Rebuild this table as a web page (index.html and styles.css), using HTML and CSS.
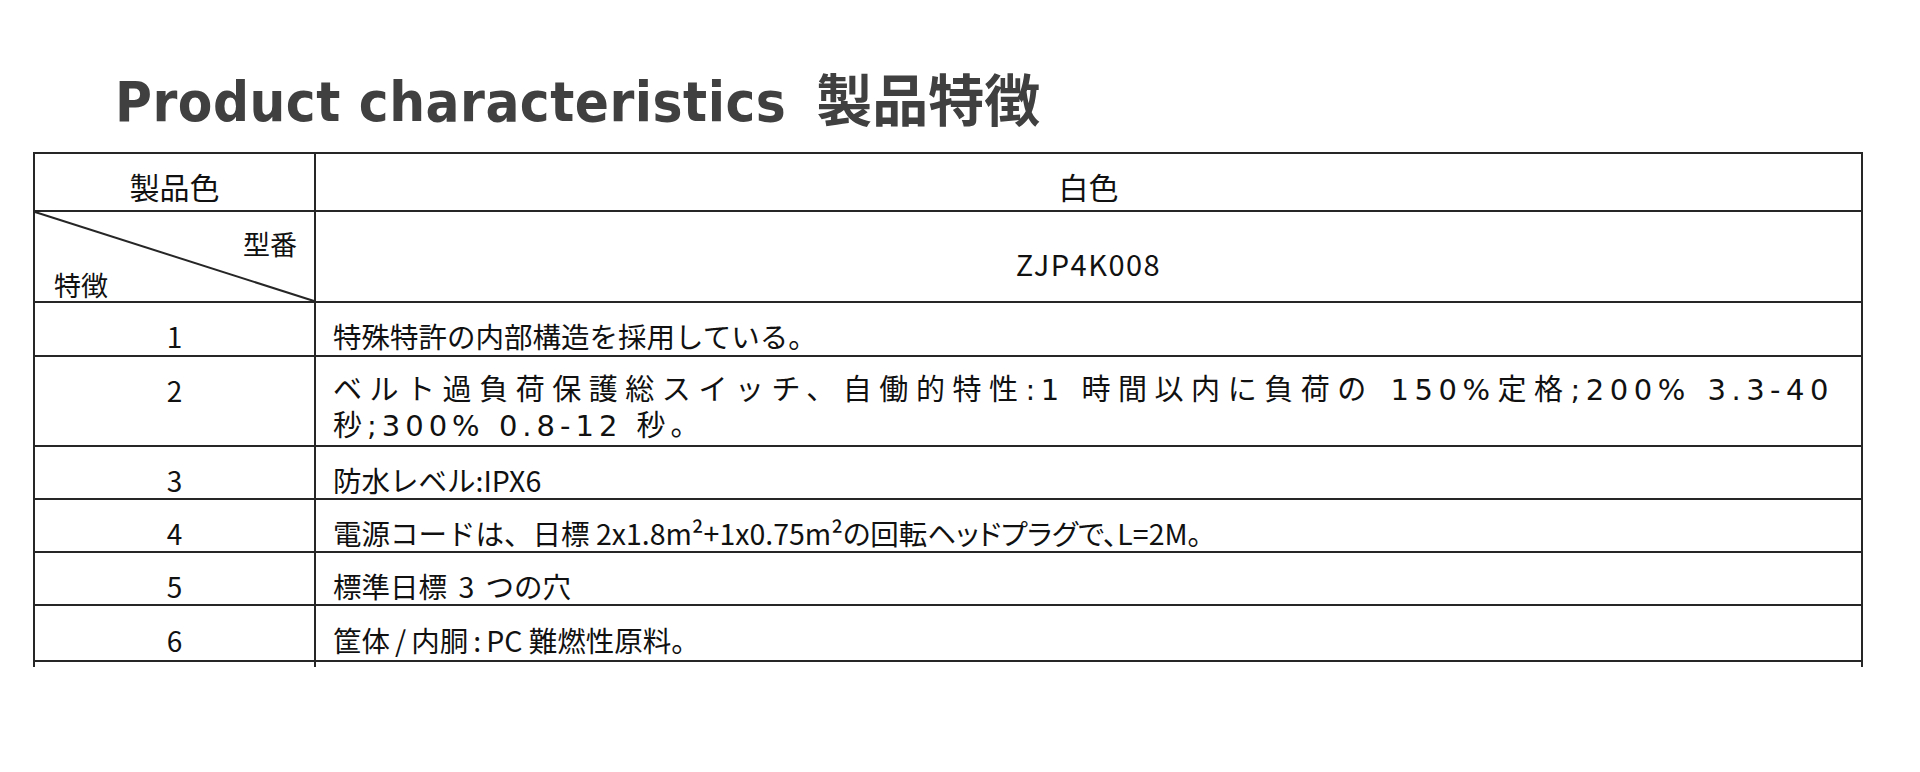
FILE: index.html
```html
<!DOCTYPE html>
<html lang="ja">
<head>
<meta charset="utf-8">
<title>Product characteristics 製品特徴</title>
<link rel="stylesheet" href="styles.css">
</head>
<body>
<h1 class="title"><span class="title-en">Product characteristics</span><span class="title-jp">製品特徴</span></h1>
<div class="spec">
  <div class="cell key head">製品色</div>
  <div class="cell val center head">白色</div>

  <div class="cell diag">
    <svg class="diag-line" viewBox="0 0 100 100" preserveAspectRatio="none" aria-hidden="true">
      <line x1="0" y1="0" x2="100" y2="100" vector-effect="non-scaling-stroke"></line>
    </svg>
    <span class="diag-top">型番</span>
    <span class="diag-bottom">特徴</span>
  </div>
  <div class="cell val center model">ZJP4K008</div>

  <div class="cell key">1</div>
  <div class="cell val">特殊特許の内部構造を採用している。</div>

  <div class="cell key key-top">2</div>
  <div class="cell val wide">
    <div class="wide-line first">ベルト過負荷保護総スイッチ、自働的特性:1 時間以内に負荷の 150%定格;200% 3.3-40</div>
    <div class="wide-line">秒;300% 0.8-12 秒。</div>
  </div>

  <div class="cell key">3</div>
  <div class="cell val">防水レベル:IPX6</div>

  <div class="cell key">4</div>
  <div class="cell val">電源コードは、日標 2x1.8m²+1x0.75m²<span class="tight">の回転ヘッドプラグで、</span>L=2M。</div>

  <div class="cell key">5</div>
  <div class="cell val spaced">標準日標 3 つの穴</div>

  <div class="cell key">6</div>
  <div class="cell val">筐体<span class="sep">/</span>内胴<span class="sep">:</span>PC 難燃性原料。</div>

  <div class="cell tail"></div>
  <div class="cell tail"></div>
</div>
</body>
</html>
```

FILE: styles.css
```css
html, body {
  margin: 0;
  padding: 0;
  background: #ffffff;
}

body {
  width: 1920px;
  height: 772px;
  overflow: hidden;
  font-family: "Noto Sans CJK JP", "Noto Sans", sans-serif;
  color: #111111;
}

.title {
  margin: 69px 0 0 0;
  padding-left: 115px;
  height: 56px;
  font-size: 56px;
  line-height: 56px;
  font-weight: 700;
  color: #404040;
  white-space: nowrap;
}

.title-en {
  font-family: "DejaVu Sans Condensed", "DejaVu Sans", sans-serif;
  font-stretch: condensed;
  font-weight: 700;
  letter-spacing: 0.5px;
}

.title-jp {
  font-family: "Noto Sans CJK JP", sans-serif;
  font-weight: 700;
  margin-left: 30px;
}

.spec {
  margin: 27px 0 0 33px;
  width: 1830px;
  box-sizing: border-box;
  display: grid;
  grid-template-columns: 281px 1547px;
  grid-template-rows: 58px 91px 54px 90px 53px 53px 53px 56px 5px;
  border-top: 2px solid #262626;
  border-left: 2px solid #262626;
}

.cell {
  box-sizing: border-box;
  border-right: 2px solid #262626;
  border-bottom: 2px solid #262626;
  display: flex;
  align-items: center;
  padding-top: 14px;
  font-size: 28.5px;
  line-height: 34px;
  white-space: nowrap;
}

.key {
  justify-content: center;
  font-size: 28px;
}

.val {
  padding-left: 17px;
}

.center {
  justify-content: center;
  padding-left: 0;
}

.head {
  padding-top: 8px;
  font-size: 30px;
}

.model {
  padding-top: 12px;
  font-size: 29px;
  letter-spacing: 1.5px;
}

.key-top {
  align-items: flex-start;
  padding-top: 16px;
}

.wide {
  flex-direction: column;
  align-items: stretch;
  justify-content: flex-start;
  padding-top: 15px;
  padding-right: 27px;
  font-family: "DejaVu Sans", "Noto Sans CJK JP", sans-serif;
  font-size: 29px;
  line-height: 36px;
  letter-spacing: 5px;
}

.wide-line {
  white-space: nowrap;
}

.wide-line.first {
  text-align: justify;
  text-align-last: justify;
  text-justify: inter-character;
  letter-spacing: 5.5px;
}

.tight {
  font-feature-settings: "palt" 1;
}

.spaced {
  word-spacing: 5px;
}

.sep {
  padding: 0 5px;
}

.diag {
  position: relative;
  flex-direction: column;
  align-items: stretch;
  justify-content: flex-start;
  padding: 16px 0 0 0;
  font-size: 27px;
  line-height: 32px;
}

.diag-line {
  position: absolute;
  left: 0;
  top: 0;
  width: 100%;
  height: 100%;
  overflow: visible;
}

.diag-line line {
  stroke: #262626;
  stroke-width: 2px;
}

.diag-top {
  align-self: flex-end;
  padding-right: 17px;
}

.diag-bottom {
  align-self: flex-start;
  margin-top: 9px;
  padding-left: 19px;
}

.tail {
  border-bottom: none;
  padding: 0;
}
```
